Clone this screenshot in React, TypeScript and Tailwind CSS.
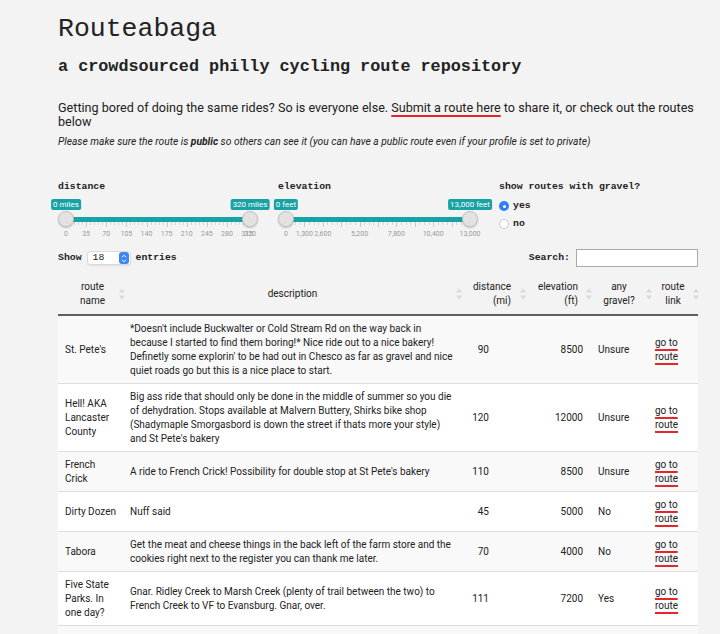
const mono = "font-['Liberation_Mono',monospace]";

type Tick = { v: number; major?: boolean; label?: string };

function SortIcon() {
  return (
    <svg width="6" height="11" viewBox="0 0 6 11" className="absolute top-1/2 -translate-y-1/2">
      <path d="M3 0 L6 4 L0 4 Z" fill="#d9d9d9" />
      <path d="M3 11 L6 7 L0 7 Z" fill="#d9d9d9" />
    </svg>
  );
}

function RangeSlider({ max, ticks, minLabel, maxLabel }: { max: number; ticks: Tick[]; minLabel: string; maxLabel: string }) {
  const x = (v: number) => 8 + (v / max) * 184;
  return (
    <div className="relative h-[47px] w-[200px]">
      <div className="absolute left-[8px] top-[24px] h-[5px] w-[184px] bg-[#17a2a3]" />
      {ticks.map((t, i) => (
        <div
          key={i}
          className={t.major ? "absolute top-[29px] h-[5px] w-px bg-[#b6cfe2]" : "absolute top-[29px] h-[3px] w-px bg-[#cfd6dc]"}
          style={{ left: x(t.v) }}
        />
      ))}
      {ticks
        .filter((t) => t.label)
        .map((t, i) => (
          <div
            key={"l" + i}
            className="absolute top-[37px] -translate-x-1/2 text-[7px] leading-[8px] text-[#9a9a9a] font-['Roboto',sans-serif]"
            style={{ left: x(t.v) }}
          >
            {t.label}
          </div>
        ))}
      <div className="absolute left-[0px] top-[18px] h-[16px] w-[16px] rounded-full border border-[#c4c4c4] bg-[#e2e2e2] shadow-[0_1px_2px_rgba(0,0,0,0.2)]" />
      <div className="absolute left-[184px] top-[18px] h-[16px] w-[16px] rounded-full border border-[#c4c4c4] bg-[#e2e2e2] shadow-[0_1px_2px_rgba(0,0,0,0.2)]" />
      <div className="absolute left-[8px] top-[6px] -translate-x-1/2 whitespace-nowrap rounded-[2px] bg-[#17a2a3] px-[2px] text-[8px] leading-[11px] text-white font-['Roboto',sans-serif]">
        {minLabel}
      </div>
      <div className="absolute left-[192px] top-[6px] -translate-x-1/2 whitespace-nowrap rounded-[2px] bg-[#17a2a3] px-[2px] text-[8px] leading-[11px] text-white font-['Roboto',sans-serif]">
        {maxLabel}
      </div>
    </div>
  );
}

function distanceTicks(): Tick[] {
  const t: Tick[] = [];
  for (let v = 0; v <= 315; v += 7) {
    const major = v % 35 === 0;
    t.push({ v, major, label: major ? String(v) : undefined });
  }
  t.push({ v: 320, major: true, label: "320" });
  return t;
}

function elevationTicks(): Tick[] {
  const shown = [0, 1300, 2600, 5200, 7800, 10400, 13000];
  const t: Tick[] = [];
  for (let v = 0; v <= 13000; v += 325) {
    const major = v % 1300 === 0;
    t.push({ v, major, label: shown.includes(v) ? v.toLocaleString("en-US") : undefined });
  }
  return t;
}

const routes = [
  {
    name: "St. Pete's",
    desc: "*Doesn't include Buckwalter or Cold Stream Rd on the way back in because I started to find them boring!* Nice ride out to a nice bakery! Definetly some explorin' to be had out in Chesco as far as gravel and nice quiet roads go but this is a nice place to start.",
    dist: "90",
    elev: "8500",
    gravel: "Unsure",
  },
  {
    name: "Hell! AKA Lancaster County",
    desc: "Big ass ride that should only be done in the middle of summer so you die of dehydration. Stops available at Malvern Buttery, Shirks bike shop (Shadymaple Smorgasbord is down the street if thats more your style) and St Pete's bakery",
    dist: "120",
    elev: "12000",
    gravel: "Unsure",
  },
  {
    name: "French Crick",
    desc: "A ride to French Crick! Possibility for double stop at St Pete's bakery",
    dist: "110",
    elev: "8500",
    gravel: "Unsure",
  },
  { name: "Dirty Dozen", desc: "Nuff said", dist: "45", elev: "5000", gravel: "No" },
  {
    name: "Tabora",
    desc: "Get the meat and cheese things in the back left of the farm store and the cookies right next to the register you can thank me later.",
    dist: "70",
    elev: "4000",
    gravel: "No",
  },
  {
    name: "Five State Parks. In one day?",
    desc: "Gnar. Ridley Creek to Marsh Creek (plenty of trail between the two) to French Creek to VF to Evansburg. Gnar, over.",
    dist: "111",
    elev: "7200",
    gravel: "Yes",
  },
];

export default function App() {
  const link = "underline decoration-[#e3262b] decoration-2 underline-offset-[3px]";
  return (
    <div className="min-h-screen bg-[#f3f3f3] text-[#222] font-['Roboto',sans-serif] overflow-hidden">
      <div className="ml-[58px] w-[640px] pt-[14px]">
        <h1 className={`${mono} text-[26.5px] leading-[30px] font-normal`}>Routeabaga</h1>
        <h3 className={`${mono} mt-[13px] text-[16.8px] leading-[20px] font-bold`}>
          a crowdsourced philly cycling route repository
        </h3>
        <p className="mt-[24px] w-[648px] text-[12.6px] leading-[14px]">
          Getting bored of doing the same rides? So is everyone else.{" "}
          <a className={link}>Submit a route here</a> to share it, or check out the routes below
        </p>
        <p className="mt-[6px] text-[10.25px] leading-[14px] italic">
          Please make sure the route is <b>public</b> so others can see it (you can have a public route even if your profile is set to private)
        </p>

        <div className="mt-[32px] grid grid-cols-[220px_221px_199px]">
          <div>
            <div className={`${mono} text-[9.8px] leading-[12px] font-bold`}>distance</div>
            <RangeSlider max={320} ticks={distanceTicks()} minLabel="0 miles" maxLabel="320 miles" />
          </div>
          <div>
            <div className={`${mono} text-[9.8px] leading-[12px] font-bold`}>elevation</div>
            <RangeSlider max={13000} ticks={elevationTicks()} minLabel="0 feet" maxLabel="13,000 feet" />
          </div>
          <div>
            <div className={`${mono} text-[9.8px] leading-[12px] font-bold`}>show routes with gravel?</div>
            <div className="mt-[6px] flex items-center gap-[4px] h-[14px]">
              <span className="flex h-[10px] w-[10px] items-center justify-center rounded-full bg-[#2f7ff7]">
                <span className="h-[3px] w-[3px] rounded-full bg-white" />
              </span>
              <span className={`${mono} text-[9.8px] font-bold`}>yes</span>
            </div>
            <div className="mt-[4px] flex items-center gap-[4px] h-[14px]">
              <span className="h-[10px] w-[10px] rounded-full border border-[#c9c9c9] bg-white" />
              <span className={`${mono} text-[9.8px] font-bold`}>no</span>
            </div>
          </div>
        </div>

        <div className="mt-[9px] flex h-[18px] items-center justify-between">
          <div className={`${mono} flex items-center text-[9.8px] font-bold`}>
            <span>Show</span>
            <span className="mx-[5px] flex h-[14px] w-[44px] items-center justify-between rounded-[3px] border border-[#dcdcdc] bg-white pl-[5px] shadow-[0_1px_1px_rgba(0,0,0,0.08)]">
              <span className="font-normal">18</span>
              <span className="mr-[1px] flex h-[12px] w-[10px] flex-col items-center justify-center rounded-[3px] bg-[#3b88f5]">
                <svg width="6" height="9" viewBox="0 0 6 9">
                  <path d="M1 3.2 L3 1.2 L5 3.2 M1 5.8 L3 7.8 L5 5.8" stroke="white" strokeWidth="1" fill="none" />
                </svg>
              </span>
            </span>
            <span>entries</span>
          </div>
          <div className={`${mono} flex items-center text-[9.8px] font-bold`}>
            <span>Search:</span>
            <span className="ml-[6px] h-[18px] w-[122px] border border-[#a9a9a9] bg-white" />
          </div>
        </div>

        <table className="mt-[7px] w-[640px] table-fixed border-collapse text-[10px] leading-[14px]">
          <colgroup>
            <col className="w-[65px]" />
            <col className="w-[339px]" />
            <col className="w-[60px]" />
            <col className="w-[68px]" />
            <col className="w-[58px]" />
            <col className="w-[50px]" />
          </colgroup>
          <thead>
            <tr className="h-[41px] border-b-2 border-[#5f5f5f]">
              <th className="relative pl-[6px] pr-[2px] text-center font-normal">
                route<br />name
                <span className="absolute right-[4px] top-1/2"><SortIcon /></span>
              </th>
              <th className="relative text-center font-normal">
                description
                <span className="absolute right-[6px] top-1/2"><SortIcon /></span>
              </th>
              <th className="relative pr-[11px] text-right font-normal">
                distance<br />(mi)
                <span className="absolute right-[2px] top-1/2"><SortIcon /></span>
              </th>
              <th className="relative pr-[12px] text-right font-normal">
                elevation<br />(ft)
                <span className="absolute right-[4px] top-1/2"><SortIcon /></span>
              </th>
              <th className="relative text-center font-normal">
                any<br />gravel?
                <span className="absolute right-[2px] top-1/2"><SortIcon /></span>
              </th>
              <th className="relative text-center font-normal">
                route<br />link
                <span className="absolute right-[5px] top-1/2"><SortIcon /></span>
              </th>
            </tr>
          </thead>
          <tbody>
            {routes.map((r, i) => (
              <tr key={r.name} className={`border-b border-[#dedede] ${i % 2 === 0 ? "bg-[#f9f9f9]" : "bg-white"}`}>
                <td className="py-[5.5px] pl-[7px] pr-[3px] align-middle">{r.name}</td>
                <td className="py-[5.5px] pl-[7px] pr-[9px] align-middle">{r.desc}</td>
                <td className="py-[5.5px] pr-[33px] text-right align-middle">{r.dist}</td>
                <td className="py-[5.5px] pr-[7px] text-right align-middle">{r.elev}</td>
                <td className="py-[5.5px] pl-[8px] align-middle">{r.gravel}</td>
                <td className="py-[5.5px] pl-[7px] align-middle">
                  <a className={link}>go to</a>
                  <br />
                  <a className={link}>route</a>
                </td>
              </tr>
            ))}
            <tr className="bg-[#f9f9f9]">
              <td className="h-[40px]" colSpan={6} />
            </tr>
          </tbody>
        </table>
      </div>
    </div>
  );
}
